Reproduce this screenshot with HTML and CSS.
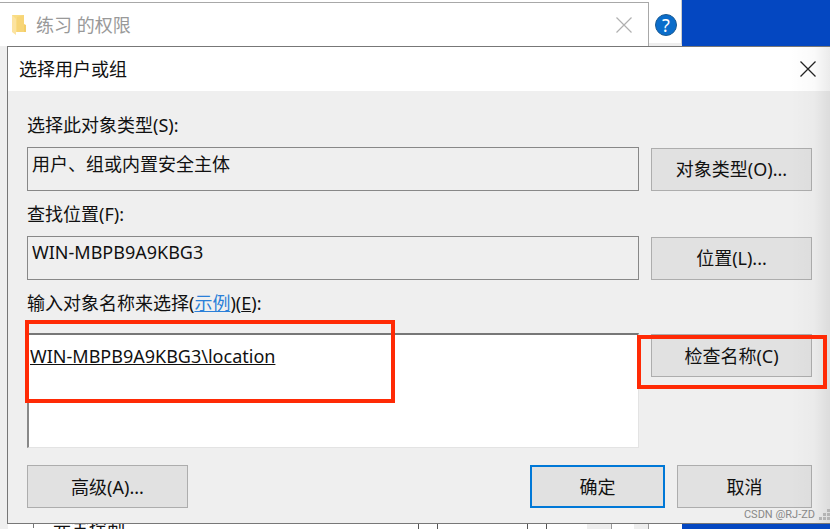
FILE: index.html
```html
<!DOCTYPE html>
<html lang="zh-CN">
<head>
    <meta charset="UTF-8">
    <meta name="viewport" content="width=device-width, initial-scale=1.0">
    <title>选择用户或组</title>
    <link rel="stylesheet" href="styles.css">
</head>
<body>
    <!-- 后面的权限窗口 -->
    <div class="back">
        <div class="back-title">
            <svg class="folder" width="16" height="22" viewBox="0 0 16 22">
                <path d="M1 1h12v17H1z" fill="#f9dc83"/>
                <path d="M11 9l4 2v7h-4z" fill="#f3cd68"/>
                <path d="M6 3l7-2v17H6z" fill="#f7d577"/>
                <path d="M1 1l4 4v16l-4-3z" fill="#fce3a0"/>
            </svg>
            <span>练习 的权限</span>
            <button class="close" aria-label="关闭权限窗口">
                <svg width="16" height="16" viewBox="0 0 16 16"><path d="M.5.5l15 15M15.5.5l-15 15" stroke="#b0b0b0" stroke-width="1.2"/></svg>
            </button>
        </div>
        <div class="help-pane">
            <button class="help" aria-label="帮助">?</button>
        </div>
        <div class="desktop"></div>
    </div>

    <!-- 选择用户或组 -->
    <main class="dialog">
        <header class="title">
            <h1>选择用户或组</h1>
            <button class="close" aria-label="关闭">
                <svg width="16" height="16" viewBox="0 0 16 16"><path d="M.5.5l15 15M15.5.5l-15 15" stroke="#222" stroke-width="1.3"/></svg>
            </button>
        </header>

        <form class="form">
            <label for="type">选择此对象类型(S):</label>
            <div class="row">
                <input id="type" class="field" type="text" value="用户、组或内置安全主体" readonly>
                <button type="button" class="btn">对象类型(O)...</button>
            </div>

            <label for="place">查找位置(F):</label>
            <div class="row">
                <input id="place" class="field" type="text" value="WIN-MBPB9A9KBG3" readonly>
                <button type="button" class="btn">位置(L)...</button>
            </div>

            <label for="names">输入对象名称来选择(<a href="#">示例</a>)(<u>E</u>):</label>
            <div class="row names-row">
                <div class="names-box">
                    <textarea id="names" class="names" spellcheck="false">WIN-MBPB9A9KBG3\location</textarea>
                    <span class="mark mark-names"></span>
                </div>
                <div class="check-box">
                    <button type="button" class="btn">检查名称(C)</button>
                    <span class="mark mark-check"></span>
                </div>
            </div>

            <div class="actions">
                <button type="button" class="btn">高级(A)...</button>
                <button type="button" class="btn ok">确定</button>
                <button type="button" class="btn cancel">取消</button>
            </div>
        </form>

        <span class="shade"></span>
        <div class="corner">
            <span>CSDN @RJ-ZD</span>
            <svg width="12" height="12" viewBox="0 0 12 12" fill="#b4b4b4">
                <path d="M9 0h3v3H9zM9 4h3v3H9zM5 4h3v3H5zM9 8h3v3H9zM5 8h3v3H5zM1 8h3v3H1z"/>
            </svg>
        </div>
    </main>

    <!-- 对话框下方露出的部分 -->
    <div class="below">
        <div class="below-list"><span>完全控制</span></div>
        <div class="below-cell"></div>
        <div class="below-cell wide"></div>
        <div class="below-cell"></div>
        <div class="below-cell gap"></div>
        <div class="below-cell scroll"></div>
        <div class="below-space"></div>
        <div class="below-cell edge"></div>
        <div class="below-space pane"></div>
        <div class="desktop"></div>
    </div>
</body>
</html>
```

FILE: styles.css
```css
* {
    box-sizing: border-box;
}
body {
    margin: 0;
    min-height: 100vh;
    display: flex;
    flex-direction: column;
    overflow: hidden;
    background-color: #efefef;
    color: #111;
    font-family: "Noto Sans", "Noto Sans CJK SC", sans-serif;
    font-size: 18px;
    line-height: 24px;
}
button, input, textarea {
    font: inherit;
    color: inherit;
    margin: 0;
    border-radius: 0;
}
.back {
    display: flex;
    height: 46px;
    background-color: white;
}
.back-title {
    flex: 1;
    display: flex;
    align-items: center;
    margin-top: 2px;
    padding: 0 16px 0 11px;
    border-top: 1px solid #a8a8a8;
    border-right: 1px solid #a8a8a8;
    color: #999;
}
.folder {
    margin-right: 9px;
}
.close {
    display: flex;
    margin-left: auto;
    padding: 0;
    border: none;
    background: none;
    cursor: pointer;
}
.help-pane {
    width: 33px;
    padding: 14px 0 0 6px;
    border-bottom: 3px solid #eee;
    border-right: 1px solid #ccc;
}
.help {
    display: block;
    width: 22px;
    height: 22px;
    padding: 0;
    border: 1px solid #1b5a91;
    border-radius: 50%;
    background-color: #0a6dcb;
    color: white;
    line-height: 20px;
    text-align: center;
}
.desktop {
    width: 148px;
    background-color: #0447c1;
}
.dialog {
    position: relative;
    margin-left: 7px;
    border: 1px solid #777;
    border-right: none;
    background-color: #efefef;
}
.title {
    display: flex;
    align-items: center;
    height: 44px;
    padding: 0 14px 0 11px;
    background-color: white;
}
h1 {
    margin: 0;
    font-size: 18px;
    font-weight: normal;
}
.form {
    padding: 11px 18px 15px 19px;
}
label {
    display: block;
    margin: 11px 0 10px;
}
a {
    color: #2a7fd8;
}
.row {
    display: flex;
    align-items: center;
    gap: 12px;
}
.field {
    flex: 1;
    min-width: 0;
    height: 44px;
    padding: 0 4px 12px;
    border: 1px solid #888;
    background-color: #efefef;
    outline: none;
}
.btn {
    width: 161px;
    height: 43px;
    padding: 0;
    border: 1px solid #adadad;
    background-color: #e1e1e1;
    cursor: pointer;
}
.names-row {
    align-items: flex-start;
    margin-top: 18px;
}
.names-box {
    position: relative;
    flex: 1;
}
.names {
    display: block;
    width: 100%;
    height: 115px;
    padding: 9px 1px;
    border: 1px solid #e3e3e3;
    border-top: 2px solid #777;
    border-left: 2px solid #888;
    background-color: white;
    outline: none;
    resize: none;
    text-decoration: underline;
}
.check-box {
    position: relative;
    padding-top: 1px;
}
.check-box .btn {
    display: block;
}
/* 红色标注框 */
.mark {
    position: absolute;
    border: 4px solid #ff2a05;
    pointer-events: none;
}
.mark-names {
    top: -13px;
    left: -2px;
    width: 370px;
    height: 83px;
}
.mark-check {
    top: 2px;
    right: -15px;
    bottom: -12px;
    left: -14px;
    z-index: 1;
}
.actions {
    display: flex;
    gap: 12px;
    margin-top: 17px;
}
.ok {
    width: 135px;
    margin-left: auto;
    border: 2px solid #0078d7;
}
.cancel {
    width: 135px;
}
.shade {
    position: absolute;
    top: 0;
    right: 0;
    bottom: 0;
    width: 40px;
    background: linear-gradient(to right, rgba(0, 0, 0, 0), rgba(0, 0, 0, 0.02) 60%, rgba(0, 0, 0, 0.08));
    pointer-events: none;
}
.corner {
    position: absolute;
    right: 0;
    bottom: 0;
    display: flex;
    align-items: center;
    gap: 3px;
    color: #888;
    font-family: Roboto, "Liberation Sans", sans-serif;
    font-size: 11px;
    line-height: 16px;
}
.below {
    display: flex;
    flex: 1;
    height: 4px;
    overflow: hidden;
    margin-left: 8px;
    background-color: white;
}
.below-list {
    flex: 1;
    height: 4px;
    margin-left: 25px;
    padding-left: 19px;
    border-left: 1px solid #777;
}
.below-list span {
    display: block;
    margin-top: -11px;
}
.below-cell {
    width: 19px;
    border-left: 1px solid #555;
}
.wide {
    width: 90px;
}
.gap {
    width: 41px;
}
.scroll {
    width: 25px;
    border-left: none;
    border-right: 1px solid #999;
    background-color: #eee;
}
.below-space {
    width: 22px;
}
.edge {
    width: 15px;
    border-left: none;
    border-right: 1px solid #999;
    background-color: #eee;
}
.pane {
    width: 33px;
}
```
